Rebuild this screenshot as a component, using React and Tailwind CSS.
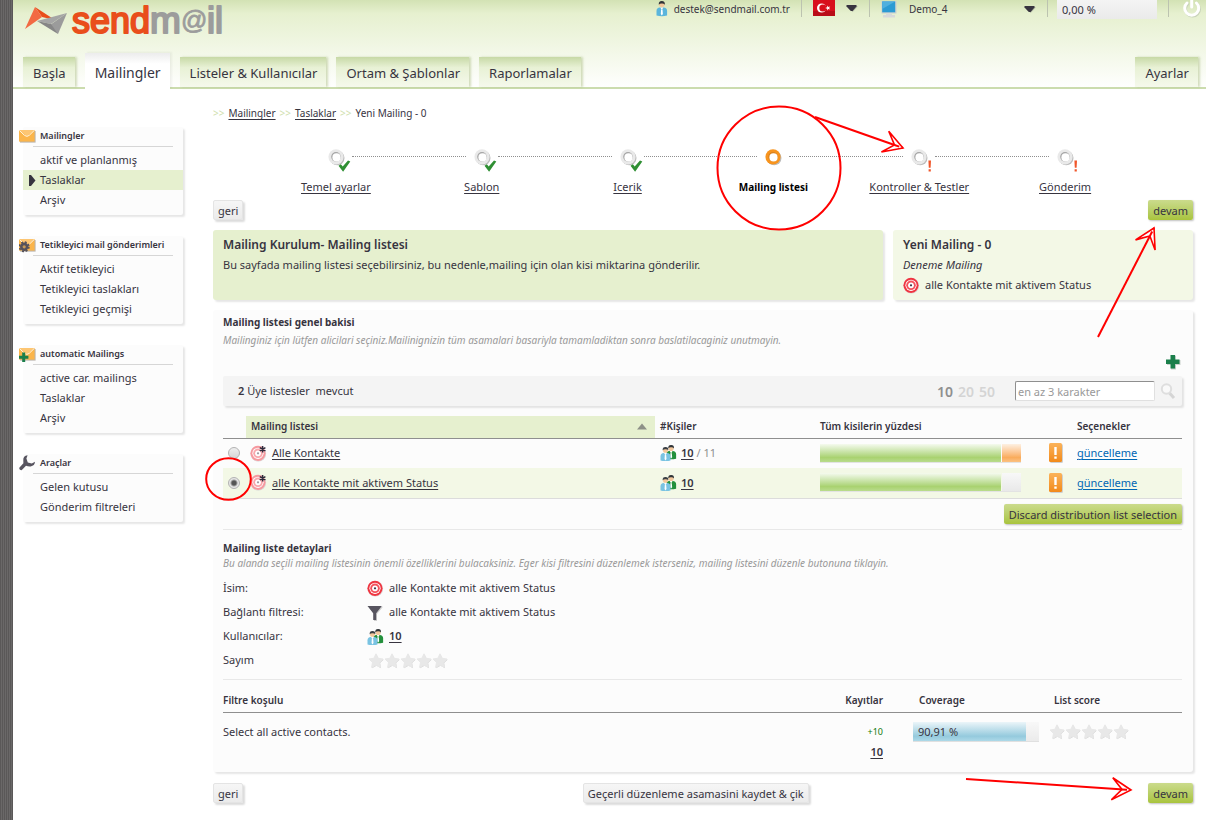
import React from "react";

const CARD_SHADOW = "shadow-[2px_2px_2px_rgba(0,0,0,0.1)]";

function Logo() {
  return (
    <a href="#" aria-label="sendmail" className="block">
      <svg width="204" height="46" viewBox="0 0 204 46">
        <path d="M10 7 L30 20 L17 17 Z" fill="#e94e1b" />
        <path d="M10 7 L17 17 L0 29 Z" fill="#f26a43" />
        <path d="M42 13 L26 24 L12 21 Z" fill="#a5a5a5" />
        <path d="M42 13 L33 34 L25 25 Z" fill="#9b9b9b" />
        <path d="M12 21 L26 24 L33 34 Z" fill="#868686" />
        <g fontFamily="'Liberation Sans', Arial, sans-serif" strokeWidth="2" strokeLinejoin="round">
          <text x="47" y="33" fontSize="36" fill="#e94e1b" stroke="#e94e1b">send</text>
          <text x="125" y="33" fontSize="37" fill="#9c9c9c" stroke="#9c9c9c">m</text>
          <text x="156" y="29" fontSize="26" fill="#9c9c9c" stroke="#9c9c9c" strokeWidth="0.8">@</text>
          <text x="182" y="33" fontSize="36" fill="#9c9c9c" stroke="#9c9c9c">il</text>
        </g>
      </svg>
    </a>
  );
}

function Person({ x = 0, y = 0, body = "#5bb5dc", hair = "#2f3338" }) {
  return (
    <g transform={`translate(${x} ${y})`}>
      <path d="M0 14.5 V10 Q0 6.6 3.4 6.4 H7 Q10.6 6.6 10.6 10 V14.5 Q5.3 16 0 14.5 Z" fill={body} />
      <path d="M3.8 6.4 L5.3 9 L6.8 6.4 Z M4.6 8.4 H6 L6.4 13 L5.3 14.4 L4.3 13 Z" fill="#fff" />
      <circle cx="5.3" cy="3.6" r="2.7" fill="#f2c79b" />
      <path d="M2.3 3.7 Q1.9 0 5.3 0 Q8.7 0 8.3 3.7 Q7.4 2.3 5.3 2.4 Q3.3 2.3 2.3 3.7 Z" fill={hair} />
    </g>
  );
}

function UserIcon() {
  return (
    <svg width="12" height="16" viewBox="0 0 11 16" aria-hidden="true">
      <Person />
    </svg>
  );
}

function UsersIcon() {
  return (
    <svg width="17" height="16" viewBox="0 0 17 17" className="shrink-0" aria-hidden="true">
      <Person x={6} y={0} body="#23903c" />
      <Person x={0} y={2} body="#79c3e2" hair="#3a3f45" />
    </svg>
  );
}

function TargetIcon({ faded = false, star = false }) {
  return (
    <svg width="17" height="17" viewBox="0 0 17 17" className="shrink-0" aria-hidden="true">
      <circle cx="8.3" cy="8.8" r="7.8" fill="#d5d5d5" />
      <circle cx="8" cy="8.3" r="7.6" fill="#fff" />
      <g opacity={faded ? 0.5 : 1}>
        <circle cx="8" cy="8.3" r="7.6" fill="#ee3541" />
        <circle cx="8" cy="8.3" r="5.6" fill="#fff" />
        <circle cx="8" cy="8.3" r="4.8" fill="#f4525c" />
        <circle cx="8" cy="8.3" r="2.9" fill="#fff" />
        <circle cx="8" cy="8.3" r="1.1" fill="#3b3445" />
      </g>
      {star && <path d="M12.6 1 V7.4 M9.8 2.6 L15.4 5.8 M15.4 2.6 L9.8 5.8" stroke="#2e2a3b" strokeWidth="1.5" />}
    </svg>
  );
}

function Stars() {
  return (
    <svg width="81" height="16" viewBox="0 0 81 16" role="img" aria-label="0 / 5">
      {[1, 17, 33, 49, 65].map((x) => (
        <g key={x} transform={`translate(${x} 0)`}>
          <path d="M8.6 1.5 L10.8 6 L15.8 6.6 L12.1 10.1 L13.1 15.2 L8.6 12.8 L4.1 15.2 L5.1 10.1 L1.4 6.6 L6.4 6 Z" fill="#d4d4d4" strokeLinejoin="round" />
          <path d="M8 0.8 L10.2 5.3 L15 6 L11.5 9.4 L12.4 14.4 L8 12.1 L3.6 14.4 L4.5 9.4 L1 6 L5.8 5.3 Z" fill="#e8e8e8" stroke="#e8e8e8" strokeLinejoin="round" />
        </g>
      ))}
    </svg>
  );
}

function Envelope({ children }) {
  return (
    <svg width="17" height="16" viewBox="0 0 17 16" aria-hidden="true">
      <rect x="1" y="3" width="15.6" height="11.6" fill="#b9b4ad" />
      <rect x="0" y="2" width="15.6" height="11.6" fill="#fbb54b" />
      <path d="M0 2 H15.6 L8 8.6 Z" fill="#fdc673" />
      <path d="M0.3 2.4 L5.5 7.4 Q8 9.4 10.2 7.4 L15.3 2.4" fill="none" stroke="#fff3dc" />
      {children}
    </svg>
  );
}

function GearEnvelope() {
  return (
    <Envelope>
      <circle cx="5.2" cy="9.8" r="4.2" fill="#55525c" />
      <circle cx="5.2" cy="9.8" r="4.7" fill="none" stroke="#55525c" strokeWidth="1.6" strokeDasharray="2 1.7" />
      <circle cx="5.2" cy="9.8" r="1.6" fill="#c79a57" />
    </Envelope>
  );
}

function PlusEnvelope() {
  return (
    <Envelope>
      <path d="M3.2 6.5 h3 v3.2 h3.2 v3 h-3.2 V16 h-3 v-3.3 H0 v-3 h3.2 Z" fill="#1b7f4b" />
    </Envelope>
  );
}

function WrenchIcon() {
  return (
    <svg width="17" height="16" viewBox="0 0 17 16" aria-hidden="true">
      <path d="M8.6 0.3 Q4 1 4.3 5.3 L4.4 8.3 L0.3 12.8 Q0 15.2 2.6 15.2 L7 10.8 Q9.2 11.6 11.6 11.4 Q15.8 10.8 16 6.8 L12.8 8.6 L8.8 7.6 L7.4 3.6 Z" fill="#57545f" />
    </svg>
  );
}

function PowerIcon() {
  return (
    <svg width="18" height="18" viewBox="0 0 18 18" fill="none" strokeLinecap="round" aria-hidden="true">
      <g stroke="#c9d3ba" transform="translate(0.8 0.8)">
        <path d="M4 3 A7 7 0 1 0 13.4 3" strokeWidth="3" />
      </g>
      <path d="M4 3 A7 7 0 1 0 13.4 3" stroke="#fff" strokeWidth="3" />
      <path d="M8.7 0 V7" stroke="#fff" strokeWidth="3" />
    </svg>
  );
}

function Caret() {
  return (
    <svg width="12" height="7" viewBox="0 0 12 7" aria-hidden="true">
      <path d="M1.4 1.2 H12 L6.6 7 Z" fill="#b5bda6" />
      <path d="M0.5 0 H10.5 V1.6 L6.6 6 H4.8 L0.5 1.6 Z" fill="#37343f" />
    </svg>
  );
}

function Divider() {
  return <span className="h-[17px] w-px bg-[#bcc3b0]" />;
}

function TopBar() {
  return (
    <div className="flex h-[19px] items-start gap-[11px] text-[10px]">
      <div className="flex items-center gap-[6px] pt-px">
        <UserIcon />
        <span className="leading-4">destek@sendmail.com.tr</span>
      </div>
      <Divider />
      <button type="button" aria-label="Türkçe" className="flex h-4 items-center gap-[11px]">
        <svg width="22" height="16" viewBox="0 0 22 16" aria-hidden="true">
          <rect width="22" height="16" fill="#d80f1c" />
          <rect y="11" width="22" height="5" fill="#b90d18" />
          <circle cx="8.6" cy="8" r="4.6" fill="#fff" />
          <circle cx="9.9" cy="8" r="3.6" fill="#d80f1c" />
          <path d="M12.2 8 L14.2 7.3 L14.2 5.4 L15.4 7 L17.2 6.4 L16.1 8 L17.2 9.6 L15.4 9 L14.2 10.6 L14.2 8.7 Z" fill="#fff" />
        </svg>
        <Caret />
      </button>
      <Divider />
      <label className="flex items-center gap-3">
        <svg width="16" height="17" viewBox="0 0 16 17" aria-hidden="true">
          <rect x="0.5" y="0" width="15" height="12.5" fill="#c9cfd2" />
          <rect x="1.2" y="0.5" width="13" height="10.8" fill="#2b9bd3" />
          <path d="M1.2 0.5 H14.2 L1.2 8 Z" fill="#4fb0de" />
          <path d="M5 12.5 H11 V14 H14 V16.5 H2 V14 H5 Z" fill="#d7d9da" />
        </svg>
        <span className="relative flex items-center">
          <select aria-label="Demo" className="h-[18px] w-[127px] appearance-none bg-transparent outline-none">
            <option>Demo_4</option>
          </select>
          <span className="pointer-events-none absolute right-0 flex">
            <Caret />
          </span>
        </span>
      </label>
      <div className="flex gap-[9px]">
        <Divider />
        <div className="h-[19px] w-[100px] bg-gradient-to-b from-[#f4f4f4] to-[#eaeaea] px-[5px] text-[11px] leading-[19px]">0,00 %</div>
      </div>
      <Divider />
      <button type="button" aria-label="Çıkış" className="ml-[3px]">
        <PowerIcon />
      </button>
    </div>
  );
}

const TABS = ["Başla", "Mailingler", "Listeler & Kullanıcılar", "Ortam & Şablonlar", "Raporlamalar"];
const TAB_CLASS =
  "h-[30px] bg-gradient-to-b from-[#c7d9a6] via-[#e8f1d5] via-35% to-[#f5f9ec] pl-[10px] pr-[9px] text-[13px] leading-[33px] shadow-[2px_0_2px_rgba(170,190,130,0.5)]";

function Tabs() {
  return (
    <nav className="flex items-end gap-[10px] border-b-2 border-[#cbdcae] pl-[10px] pr-2">
      {TABS.map((t) =>
        t === "Mailingler" ? (
          <a key={t} href="#" aria-current="page" className="-mb-[2px] h-9 bg-gradient-to-b from-[#ececec] to-white to-30% pl-[10px] pr-[9px] text-[14px] leading-[40px] shadow-[2px_-1px_2px_rgba(0,0,0,0.05)]">
            {t}
          </a>
        ) : (
          <a key={t} href="#" className={TAB_CLASS}>
            {t}
          </a>
        )
      )}
      <a href="#" className={`ml-auto ${TAB_CLASS}`}>
        Ayarlar
      </a>
    </nav>
  );
}

const MENUS = [
  { title: "Mailingler", icon: <Envelope />, items: ["aktif ve planlanmış", "Taslaklar", "Arşiv"], active: 1 },
  { title: "Tetikleyici mail gönderimleri", icon: <GearEnvelope />, items: ["Aktif tetikleyici", "Tetikleyici taslakları", "Tetikleyici geçmişi"] },
  { title: "automatic Mailings", icon: <PlusEnvelope />, items: ["active car. mailings", "Taslaklar", "Arşiv"] },
  { title: "Araçlar", icon: <WrenchIcon />, items: ["Gelen kutusu", "Gönderim filtreleri"] },
];

function Sidebar() {
  return (
    <aside className="flex w-40 shrink-0 flex-col gap-[21px] pt-[19px]">
      {MENUS.map((m) => (
        <section key={m.title} className={`rounded-[2px] bg-[#fcfcfc] pb-[5px] ${CARD_SHADOW}`}>
          <div className="-ml-1 flex h-[19px] items-center gap-1 whitespace-nowrap pb-[2px]">
            {m.icon}
            <h2 className="text-[9px] font-semibold">{m.title}</h2>
          </div>
          <div className="ml-[10px] mr-[10px] border-t border-[#d6d6d6]" />
          <ul className="pt-[3px]">
            {m.items.map((it, i) => (
              <li key={it} className={m.active === i ? "bg-[#e6f0cf]" : ""}>
                <a href="#" className="relative block pl-[17px] leading-5">
                  {m.active === i && (
                    <svg width="7" height="11" viewBox="0 0 7 11" className="absolute left-[6px] top-[5px]" aria-hidden="true">
                      <path d="M0 0 L2 0 L6.5 5.5 L2 11 L0 11 Z" fill="#37343f" />
                    </svg>
                  )}
                  {it}
                </a>
              </li>
            ))}
          </ul>
        </section>
      ))}
    </aside>
  );
}

function Arrow({ width, height, x1, y1, x2, y2, className }) {
  const angle = (Math.atan2(y2 - y1, x2 - x1) * 180) / Math.PI;
  return (
    <svg width={width} height={height} viewBox={`0 0 ${width} ${height}`} className={`pointer-events-none absolute z-10 max-w-none overflow-visible ${className}`} aria-hidden="true">
      <line x1={x1} y1={y1} x2={x2} y2={y2} stroke="#f00" strokeWidth="2" />
      <g transform={`translate(${x2} ${y2}) rotate(${angle})`}>
        <path d="M0 0 L-19 -11 L-9 0 L-19 11 Z" fill="#fff" stroke="#f00" strokeWidth="1.6" />
        <path d="M-9 0 H-4" stroke="#f00" strokeWidth="2" />
      </g>
    </svg>
  );
}

function StepIcon({ state }) {
  return (
    <svg width="24" height="24" viewBox="0 0 24 24" className="ml-2" aria-hidden="true">
      <circle cx="9.2" cy="9" r="7.3" fill="#bdbdbd" />
      <circle cx="8" cy="7.8" r="7.6" fill={state === "active" ? "#f7941e" : "#e9e9e9"} />
      <circle cx="8" cy="7.8" r="4.8" fill={state === "active" ? "#d9821e" : "#a5a5a5"} />
      <circle cx="8.5" cy="8.4" r="4.1" fill="#fff" />
      {state === "done" && <path d="M10.5 16.8 L12.9 15.2 L14.7 17.6 L20 11.5 L22.3 12.6 L15.1 22.8 Z" fill="#2f8f33" />}
      {state === "todo" && <path d="M17.4 11.5 h2.6 l-0.4 7.2 h-1.8 Z M17.6 20.3 h2.2 v2.2 h-2.2 Z" fill="#f0562a" />}
    </svg>
  );
}

const STEPS = [
  ["Temel ayarlar", "done"],
  ["Sablon", "done"],
  ["Icerik", "done"],
  ["Mailing listesi", "active"],
  ["Kontroller & Testler", "todo"],
  ["Gönderim", "todo"],
];

function Steps() {
  return (
    <ol className="grid grid-cols-6 pl-[50px] pr-[55px] pt-[28px]">
      {STEPS.map(([label, state], i) => (
        <li key={label} className="relative flex flex-col items-center gap-[6px]">
          {i < 5 && <span className="absolute left-[calc(50%+16px)] top-[7px] w-[calc(100%-32px)] border-t border-dotted border-[#8f8f8f]" />}
          <StepIcon state={state} />
          {state === "active" ? (
            <strong className="text-[10px] leading-4 text-black">{label}</strong>
          ) : (
            <a href="#" className="leading-4 underline underline-offset-2">
              {label}
            </a>
          )}
          {state === "active" && (
            <>
              <svg width="126" height="126" viewBox="0 0 126 126" className="pointer-events-none absolute -top-[44px] left-[calc(50%-57px)] z-10 max-w-none" aria-hidden="true">
                <circle cx="63" cy="63" r="61.5" fill="none" stroke="#f00" strokeWidth="2" />
              </svg>
              <Arrow width={88} height={31} x1={0} y1={0} x2={88} y2={31} className="-top-[32px] left-[calc(50%+42px)]" />
            </>
          )}
        </li>
      ))}
    </ol>
  );
}

function Button({ green = false, children }) {
  return (
    <button
      type="button"
      className={
        green
          ? "block h-[20px] rounded-[2px] bg-gradient-to-b from-[#cbdb8c] to-[#a9c43c] px-[5px] leading-[21px] shadow-[1px_1px_2px_rgba(0,0,0,0.25)]"
          : "block h-[20px] rounded-[2px] border border-[#e4e4e4] bg-gradient-to-b from-[#f6f6f6] to-[#ebebeb] px-1 leading-[19px] shadow-[2px_2px_2px_rgba(0,0,0,0.14)]"
      }
    >
      {children}
    </button>
  );
}

function WarnIcon() {
  return (
    <svg width="14" height="20" viewBox="0 0 14 20" aria-hidden="true">
      <defs>
        <linearGradient id="warn" x1="0" y1="0" x2="0" y2="1">
          <stop offset="0" stopColor="#fbb35a" />
          <stop offset="1" stopColor="#f28a1b" />
        </linearGradient>
      </defs>
      <rect x="1" y="1" width="13" height="19" rx="1.5" fill="#cfcfcf" />
      <rect width="13" height="19" rx="1.5" fill="url(#warn)" />
      <path d="M5.3 4 h2.4 v8 h-2.4 Z M5.3 13.6 h2.4 v2.2 h-2.4 Z" fill="#fff" />
    </svg>
  );
}

function ListRow({ name, count, total, rest, selected }) {
  return (
    <tr className={`h-[30px] ${selected ? "border-b border-[#dcdcdc] bg-[#f3f8e6]" : ""}`}>
      <td className="relative">
        <input
          type="radio"
          name="list"
          aria-label={name}
          defaultChecked={selected}
          className="ml-[5px] block size-3 appearance-none rounded-full border border-[#b3b3b3] bg-gradient-to-b from-[#efefef] to-[#d6d6d6] checked:bg-[radial-gradient(circle,#555_0,#555_2px,#e6e6e6_4px)]"
        />
        {selected && (
          <svg width="47" height="44" viewBox="0 0 47 44" className="pointer-events-none absolute -left-[18px] -top-[11px] z-10 max-w-none" aria-hidden="true">
            <ellipse cx="23.5" cy="22" rx="22.3" ry="20.8" fill="none" stroke="#f00" strokeWidth="2" />
          </svg>
        )}
      </td>
      <td className="px-1">
        <div className="flex items-center gap-[5px]">
          <TargetIcon faded star />
          <a href="#" className="underline underline-offset-2">
            {name}
          </a>
        </div>
      </td>
      <td className="px-[5px]">
        <div className="flex items-center gap-1">
          <UsersIcon />
          <span>
            <a href="#" className="font-semibold underline underline-offset-2">
              {count}
            </a>
            {total && <span className="text-[#8f8f8f]"> / {total}</span>}
          </span>
        </div>
      </td>
      <td className="px-[5px]">
        <div className="flex h-[19px] w-[201px] gap-px border-b border-[#e3e3e3]">
          <div className="w-[181px] bg-gradient-to-b from-[#f5faee] via-[#a9d270] via-75% to-[#b9dc8c]" />
          <div className={rest ? "flex-1 bg-gradient-to-b from-[#fdf0e2] via-[#f9ac5c] via-75% to-[#fbc182]" : "flex-1 bg-gradient-to-b from-[#f8f8f8] to-[#e9e9e9]"} />
        </div>
      </td>
      <td className="pl-2">
        <WarnIcon />
      </td>
      <td className="px-[5px]">
        <a href="#" className="text-[#0067b4] underline underline-offset-2">
          güncelleme
        </a>
      </td>
    </tr>
  );
}

function ListTable() {
  return (
    <table className="mt-[10px] w-full table-fixed border-collapse text-left">
      <colgroup>
        <col className="w-[23px]" />
        <col />
        <col className="w-[160px]" />
        <col className="w-[226px]" />
        <col className="w-[31px]" />
        <col className="w-[110px]" />
      </colgroup>
      <thead>
        <tr className="h-[22px] border-b border-[#8f8f8f] text-[10px]">
          <td />
          <th className="bg-[#e6f0cf] px-[5px] font-semibold">
            <div className="flex items-center justify-between">
              Mailing listesi
              <svg width="14" height="7" viewBox="0 0 14 7" aria-hidden="true">
                <path d="M1 6.5 L6 0.5 L11 6.5 Z" fill="#8d9087" />
              </svg>
            </div>
          </th>
          <th className="px-[5px] font-semibold">#Kişiler</th>
          <th className="px-[5px] font-semibold">Tüm kisilerin yüzdesi</th>
          <td />
          <th className="px-[5px] font-semibold">Seçenekler</th>
        </tr>
      </thead>
      <tbody>
        <ListRow name="Alle Kontakte" count="10" total="11" rest />
        <ListRow name="alle Kontakte mit aktivem Status" count="10" selected />
      </tbody>
    </table>
  );
}

function DetailRow({ label, children }) {
  return (
    <div className="flex h-6 items-center">
      <dt className="w-[144px]">{label}</dt>
      <dd className="flex items-center gap-[5px]">{children}</dd>
    </div>
  );
}

function ConditionTable() {
  return (
    <table className="w-full table-fixed border-collapse text-left">
      <colgroup>
        <col />
        <col className="w-[90px]" />
        <col className="w-[135px]" />
        <col className="w-[134px]" />
      </colgroup>
      <thead>
        <tr className="h-[24px] border-b border-[#8f8f8f] text-[10px]">
          <th className="font-semibold">Filtre koşulu</th>
          <th className="pr-[30px] text-right font-semibold">Kayıtlar</th>
          <th className="pl-[6px] font-semibold">Coverage</th>
          <th className="pl-[6px] font-semibold">List score</th>
        </tr>
      </thead>
      <tbody className="align-top">
        <tr>
          <td className="pt-[9px] leading-5">Select all active contacts.</td>
          <td className="pr-[30px] pt-[9px] text-right leading-5">
            <div className="text-[9px] leading-5 text-[#117a11]">+10</div>
            <a href="#" className="font-semibold underline underline-offset-2">
              10
            </a>
          </td>
          <td className="pt-[9px]">
            <div className="h-5 w-[126px] border-b border-[#e0e0e0] bg-gradient-to-b from-[#f8f8f8] to-[#ebebeb]">
              <div className="h-[19px] w-[113px] bg-gradient-to-b from-[#ebf5f9] via-[#94cadd] via-75% to-[#add9e8] pl-[5px] leading-5">90,91 %</div>
            </div>
          </td>
          <td className="pt-[11px]">
            <Stars />
          </td>
        </tr>
      </tbody>
    </table>
  );
}

export default function App() {
  return (
    <div className="flex min-h-screen bg-white font-['Noto_Sans','Open_Sans',sans-serif] text-[11px] text-[#37343f]">
      <div className="w-[13px] shrink-0 bg-[repeating-linear-gradient(90deg,#5a5858_0,#5a5858_1px,#6a6868_1px,#6a6868_2px)]" />
      <div className="min-w-0 flex-1">
        <header className="bg-gradient-to-b from-[#d3e2b4] via-[#e6f0cf] via-15% to-white">
          <div className="flex h-[53px] items-start justify-between pl-3 pr-[5px]">
            <Logo />
            <TopBar />
          </div>
          <Tabs />
        </header>

        <div className="flex gap-[30px] pb-4 pl-[10px] pr-[13px] pt-[19px]">
          <Sidebar />
          <main className="min-w-0 flex-1">
            <nav className="-mt-[3px] flex gap-[4px] text-[10px] leading-4">
              <span className="text-[#cfe0ae]">&gt;&gt;</span>
              <a href="#" className="underline underline-offset-2">Mailingler</a>
              <span className="text-[#cfe0ae]">&gt;&gt;</span>
              <a href="#" className="underline underline-offset-2">Taslaklar</a>
              <span className="text-[#cfe0ae]">&gt;&gt;</span>
              <span>Yeni Mailing - 0</span>
            </nav>

            <Steps />

            <div className="mt-[5px] flex justify-between">
              <Button>geri</Button>
              <div className="relative">
                <Button green>devam</Button>
                <Arrow width={56} height={109} x1={0} y1={109} x2={56} y2={0} className="right-[39px] top-[28px]" />
              </div>
            </div>

            <div className="mt-[10px] flex gap-[10px]">
              <section className={`min-h-[70px] flex-1 rounded-[3px] bg-[#e6f0cf] px-[10px] py-[5px] ${CARD_SHADOW}`}>
                <h1 className="text-[12px] font-semibold leading-5">Mailing Kurulum- Mailing listesi</h1>
                <p className="leading-5">Bu sayfada mailing listesi seçebilirsiniz, bu nedenle,mailing için olan kisi miktarina gönderilir.</p>
              </section>
              <section className={`w-[300px] rounded-[3px] bg-[#f3f8e6] px-[10px] py-[5px] ${CARD_SHADOW}`}>
                <h2 className="text-[12px] font-semibold leading-5">Yeni Mailing - 0</h2>
                <p className="italic leading-5">Deneme Mailing</p>
                <p className="flex items-center gap-[5px] leading-5">
                  <TargetIcon />
                  alle Kontakte mit aktivem Status
                </p>
              </section>
            </div>

            <section className={`mt-[10px] rounded-[3px] bg-[#fcfcfc] pb-[10px] pl-[10px] pr-[11px] pt-[2px] ${CARD_SHADOW}`}>
              <h2 className="text-[10px] font-bold leading-5">Mailing listesi genel bakisi</h2>
              <p className="text-[10px] italic leading-4 text-[#999]">
                Mailinginiz için lütfen alicilari seçiniz.Mailinignizin tüm asamalari basariyla tamamladiktan sonra baslatilacaginiz unutmayin.
              </p>
              <div className="flex h-7 items-center justify-end">
                <button type="button" aria-label="Ekle">
                  <svg width="17" height="16" viewBox="0 0 17 16">
                    <path d="M6 2 h5 v4 h4.5 v5 h-4.5 v4.5 h-5 V11 H2 V6 h4 Z" fill="#c9d2cc" />
                    <path d="M5.5 1 h4.6 v4.4 h4.4 v4.6 h-4.4 v4.4 h-4.6 V10 H1 V5.4 h4.5 Z" fill="#1b7f4b" />
                  </svg>
                </button>
              </div>
              <div className={`flex h-[30px] items-center rounded-[2px] bg-[#f4f4f4] pl-[15px] pr-[6px] ${CARD_SHADOW}`}>
                <p className="flex-1">
                  <b className="font-semibold">2</b> Üye listesler&nbsp; mevcut
                </p>
                <div className="mr-5 flex gap-[5px] text-[14px] font-semibold text-[#d4d4d4]">
                  <button type="button" className="text-[#8f8f8f]">10</button>
                  <button type="button">20</button>
                  <button type="button">50</button>
                </div>
                <input
                  type="text"
                  aria-label="Ara"
                  placeholder="en az 3 karakter"
                  className="h-5 w-[140px] rounded-[2px] border border-[#e0e0e0] border-l-[#8f8f8f] border-t-[#8f8f8f] bg-white px-[2px] outline-none placeholder:text-[#999]"
                />
                <button type="button" aria-label="Bul" className="ml-[5px]">
                  <svg width="16" height="16" viewBox="0 0 16 16" fill="none">
                    <path d="M9.5 10 L14 15" stroke="#d5d5d5" strokeWidth="3" />
                    <circle cx="6.5" cy="6" r="4.7" stroke="#dedede" strokeWidth="2" fill="#f9f9f9" />
                  </svg>
                </button>
              </div>

              <ListTable />

              <div className="flex justify-end border-b border-[#e8e8e8] pb-[5px] pt-[5px]">
                <Button green>Discard distribution list selection</Button>
              </div>

              <h2 className="pt-[9px] text-[10px] font-bold leading-[18px]">Mailing liste detaylari</h2>
              <p className="text-[10px] italic leading-3 text-[#999]">
                Bu alanda seçili mailing listesinin önemli özelliklerini bulacaksiniz. Eger kisi filtresini düzenlemek isterseniz, mailing listesini düzenle butonuna tiklayin.
              </p>
              <dl className="border-b border-[#e8e8e8] pb-[6px] pt-2">
                <DetailRow label="İsim:">
                  <TargetIcon />
                  alle Kontakte mit aktivem Status
                </DetailRow>
                <DetailRow label="Bağlantı filtresi:">
                  <svg width="17" height="16" viewBox="0 0 17 16" aria-hidden="true">
                    <path d="M1.5 1.8 H16 L10 9 V16 H7 V9 Z" fill="#cfcfcf" />
                    <path d="M0.5 1 H14.8 L9.2 8.2 V15 H6.2 V8.2 Z" fill="#57545f" />
                  </svg>
                  alle Kontakte mit aktivem Status
                </DetailRow>
                <DetailRow label="Kullanıcılar:">
                  <UsersIcon />
                  <a href="#" className="font-semibold underline underline-offset-2">10</a>
                </DetailRow>
                <DetailRow label="Sayım">
                  <Stars />
                </DetailRow>
              </dl>
              <div className="pt-[9px]">
                <ConditionTable />
              </div>
            </section>

            <div className="mt-[11px] flex justify-between">
              <Button>geri</Button>
              <Button>Geçerli düzenleme asamasini kaydet &amp; çik</Button>
              <div className="relative">
                <Button green>devam</Button>
                <Arrow width={165} height={11} x1={0} y1={0} x2={165} y2={11} className="-top-[4px] right-[62px]" />
              </div>
            </div>
          </main>
        </div>
      </div>
    </div>
  );
}
